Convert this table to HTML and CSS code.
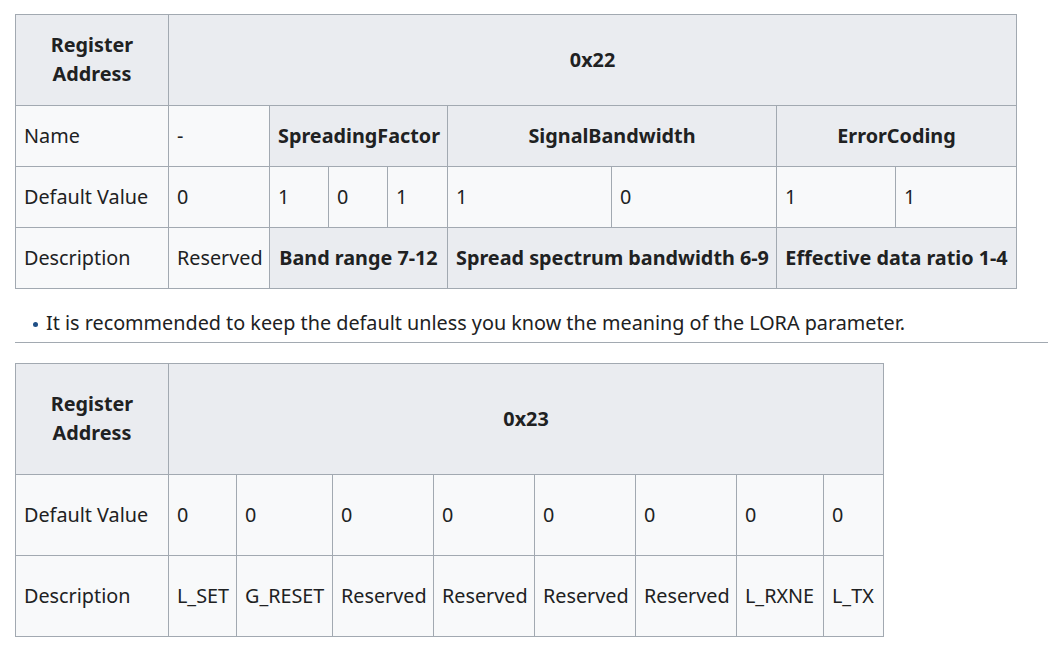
FILE: index.html
```html
<!DOCTYPE html>
<html>
<head>
<meta charset="utf-8">
<link rel="stylesheet" href="styles.css">
</head>
<body>
<div class="page">
  <table class="wikitable t1">
    <colgroup>
      <col class="w153"><col class="w101"><col class="w59"><col class="w59"><col class="w60"><col class="w164"><col class="w165"><col class="w119"><col class="w121">
    </colgroup>
    <tr class="head">
      <th>Register<br>Address</th>
      <th colspan="8">0x22</th>
    </tr>
    <tr>
      <td>Name</td>
      <td>-</td>
      <th colspan="3">SpreadingFactor</th>
      <th colspan="2">SignalBandwidth</th>
      <th colspan="2">ErrorCoding</th>
    </tr>
    <tr>
      <td>Default Value</td>
      <td>0</td><td>1</td><td>0</td><td>1</td><td>1</td><td>0</td><td>1</td><td>1</td>
    </tr>
    <tr>
      <td>Description</td>
      <td>Reserved</td>
      <th colspan="3">Band range 7-12</th>
      <th colspan="2">Spread spectrum bandwidth 6-9</th>
      <th colspan="2">Effective data ratio 1-4</th>
    </tr>
  </table>

  <ul class="notes">
    <li>It is recommended to keep the default unless you know the meaning of the LORA parameter.</li>
  </ul>
  <div class="rule"></div>

  <table class="wikitable t2">
    <colgroup>
      <col class="w153"><col class="w68"><col class="w96"><col class="w101"><col class="w101"><col class="w101"><col class="w101"><col class="w87"><col class="w60">
    </colgroup>
    <tr class="head">
      <th>Register<br>Address</th>
      <th colspan="8">0x23</th>
    </tr>
    <tr>
      <td>Default Value</td>
      <td>0</td><td>0</td><td>0</td><td>0</td><td>0</td><td>0</td><td>0</td><td>0</td>
    </tr>
    <tr>
      <td>Description</td>
      <td>L_SET</td><td>G_RESET</td><td>Reserved</td><td>Reserved</td><td>Reserved</td><td>Reserved</td><td>L_RXNE</td><td>L_TX</td>
    </tr>
  </table>
</div>
</body>
</html>
```

FILE: styles.css
```css
html, body {
  margin: 0;
  padding: 0;
  background: #ffffff;
}

body {
  font-family: "Noto Sans", "Open Sans", sans-serif;
  font-size: 19.8px;
  line-height: 29px;
  color: #202122;
}

.page {
  padding: 14px 0 0 15px;
}

.wikitable {
  border-collapse: collapse;
  table-layout: fixed;
  background: #f8f9fa;
  border: 1px solid #a2a9b1;
}

.t1 { width: 1002px; }
.t2 { width: 869px; }

.wikitable th,
.wikitable td {
  border: 1px solid #a2a9b1;
  padding: 0 8px 2px 8px;
  white-space: nowrap;
  text-align: left;
  vertical-align: middle;
}

.wikitable th {
  background: #eaecf0;
  text-align: center;
  font-weight: bold;
}

.t1 tr { height: 61px; }
.t1 tr.head { height: 91px; }

.t2 tr { height: 81px; }
.t2 tr.head { height: 111px; }

.w153 { width: 153px; }
.w101 { width: 101px; }
.w59 { width: 59px; }
.w60 { width: 60px; }
.w164 { width: 164px; }
.w165 { width: 165px; }
.w119 { width: 119px; }
.w121 { width: 121px; }
.w68 { width: 68px; }
.w96 { width: 96px; }
.w87 { width: 87px; }

.notes {
  list-style: none;
  margin: 19px 0 0 0;
  padding: 0 0 0 31px;
}

.notes li {
  position: relative;
}

.notes li::before {
  content: "";
  position: absolute;
  left: -13px;
  top: 14px;
  width: 5px;
  height: 5px;
  border-radius: 50%;
  background: #1f4f86;
}

.rule {
  margin-top: 5px;
  border-bottom: 1px solid #a2a9b1;
  margin-bottom: 20px;
}
```
